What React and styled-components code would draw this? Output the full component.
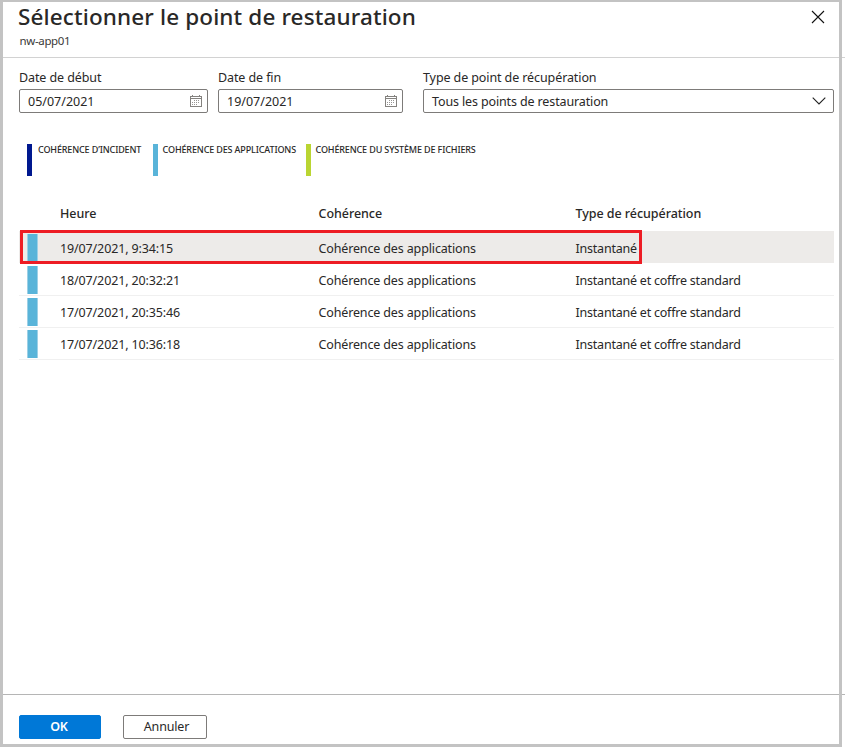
import styled, { createGlobalStyle } from 'styled-components';

const GlobalStyle = createGlobalStyle`
    *{
        box-sizing: border-box;
    }
    body{
        background-color: #fff;
        color: #292827;
        font-family: 'Noto Sans', 'Open Sans', sans-serif;
        font-size: 12.5px;
        margin: 0;
        overflow: hidden;
    }
`

const PageStyled = styled.main`
    display: flex;
    flex-direction: column;
    height: 749px;
    position: relative;
    width: 845px;
`

const Frame = styled.div`
    border: 3px solid #c3c3c3;
    border-top-width: 2px;
    height: 747px;
    left: 0;
    pointer-events: none;
    position: absolute;
    top: 0;
    width: 842px;
`

const Header = styled.header`
    border-bottom: 1px solid #d2d2d2;
    display: flex;
    height: 58px;
    justify-content: space-between;
    padding: 2px 20px 0 18px;
    h1{
        font-size: 22.5px;
        font-weight: 500;
        letter-spacing: 0.13px;
        line-height: 30px;
        margin: 0;
    }
    p{
        color: #3b3a39;
        font-size: 11.5px;
        letter-spacing: -0.35px;
        line-height: 16px;
        margin: 1px 0 0 1.5px;
    }
`

const CloseBtn = styled.button`
    background: none;
    border: 0;
    height: 14px;
    margin-top: 8px;
    padding: 0;
    width: 14px;
    svg{
        display: block;
    }
`

const Filters = styled.section`
    display: grid;
    grid-template-columns: 189px 185px 411px;
    padding: 10px 0 0 19px;
    column-gap: 10px;
    label:last-child{
        margin-left: 10px;
        width: 411px;
    }
`

const FieldStyled = styled.label`
    display: flex;
    flex-direction: column;
    gap: 2px;
    line-height: 19px;
    .box{
        align-items: center;
        border: 1px solid #7d7b79;
        border-radius: 2px;
        display: flex;
        height: 24px;
        justify-content: space-between;
        padding: 0 ${props => props.$end}px 0 8px;
    }
    .name{
        letter-spacing: -0.1px;
    }
    .value{
        letter-spacing: ${props => props.$spacing}px;
    }
`

const Legend = styled.ul`
    display: flex;
    list-style: none;
    margin: 31px 0 0;
    padding: 0 0 0 27px;
`

const LegendItem = styled.li`
    border-left: 5px solid ${props => props.$color};
    font-size: 9px;
    font-weight: 500;
    height: 32px;
    letter-spacing: -0.14px;
    line-height: 12px;
    padding-left: ${props => props.$pad}px;
    white-space: nowrap;
    width: ${props => props.$width}px;
`

const Table = styled.section`
    flex: 1;
    margin: 19px 11px 0 19px;
    position: relative;
`

const Row = styled.div`
    align-items: center;
    align-content: start;
    background-color: ${props => props.$selected ? '#edebe9' : 'transparent'};
    background-clip: padding-box;
    border-bottom: 1px solid ${props => props.$selected ? '#fff' : '#f0f0f0'};
    display: grid;
    grid-template-columns: 41px 258.5px 257px 1fr;
    height: ${props => props.$selected ? 33 : 32}px;
    padding-top: ${props => props.$selected ? 3 : 2}px;
    .bar{
        background-color: #59b4d9;
        border: solid #9dd0e6;
        border-width: 0 1px;
        height: 28px;
        margin-left: 8px;
        width: 11px;
    }
    .time{
        letter-spacing: -0.13px;
    }
    .state{
        letter-spacing: -0.14px;
    }
    .type{
        letter-spacing: -0.22px;
    }
`

const HeadRow = styled(Row)`
    align-content: center;
    border: 0;
    font-weight: 500;
    height: 36px;
    letter-spacing: -0.05px;
    padding: 0;
`

const Highlight = styled.div`
    border: 3px solid #ed1c24;
    height: 34px;
    left: 1px;
    position: absolute;
    top: 35px;
    width: 622px;
`

const Footer = styled.footer`
    border-top: 1px solid #b5b5b5;
    display: flex;
    gap: 22px;
    height: 55px;
    padding: 20px 0 0 19px;
`

const Btn = styled.button`
    background-color: ${props => props.$primary ? '#0078d7' : '#fff'};
    border: 1px solid ${props => props.$primary ? '#0078d7' : '#7d7b79'};
    border-radius: 2px;
    color: ${props => props.$primary ? '#fff' : '#292827'};
    font-family: inherit;
    font-size: 12.5px;
    font-weight: ${props => props.$primary ? 600 : 400};
    height: 24px;
    letter-spacing: -0.15px;
    line-height: 20px;
    padding: 0;
    width: ${props => props.$primary ? 82 : 84}px;
    span{
        margin-left: ${props => props.$primary ? -2 : 3}px;
    }
`

const legend = [
    { label: 'COHÉRENCE D’INCIDENT', color: '#00188f', width: 126, pad: 6 },
    { label: 'COHÉRENCE DES APPLICATIONS', color: '#59b4d9', width: 153, pad: 4.6 },
    { label: 'COHÉRENCE DU SYSTÈME DE FICHIERS', color: '#bad532', width: 200, pad: 4.5 },
]

const points = [
    { time: '19/07/2021, 9:34:15', type: 'Instantané' },
    { time: '18/07/2021, 20:32:21', type: 'Instantané et coffre standard' },
    { time: '17/07/2021, 20:35:46', type: 'Instantané et coffre standard' },
    { time: '17/07/2021, 10:36:18', type: 'Instantané et coffre standard' },
]

function CalendarIcon(){
    return(
        <svg width='12' height='12' viewBox='0 0 12 12' shapeRendering='crispEdges'>
            <path d='M.5 1.5h11v10H.5zM1 3.5h10M2.5 0v2M9.5 0v2' fill='none' stroke='#84827f' />
            <path d='M4 5.5h6M2 7.5h8M2 9.5h6' stroke='#979593' strokeDasharray='1 1' />
        </svg>
    )
}

function Chevron(){
    return(
        <svg width='14' height='8' viewBox='0 0 14 8'>
            <path d='M.7.7 7 7 13.3.7' fill='none' stroke='#222' strokeWidth='1.1' />
        </svg>
    )
}

function Field({ name, value, icon, end, spacing = 0 }){
    return(
        <FieldStyled $end={end} $spacing={spacing}>
            <span className='name'>{name}</span>
            <div className='box'>
                <span className='value'>{value}</span>
                {icon}
            </div>
        </FieldStyled>
    )
}

export default function App(){
    return(
        <PageStyled>
            <GlobalStyle />
            <Header>
                <div>
                    <h1>Sélectionner le point de restauration</h1>
                    <p>nw-app01</p>
                </div>
                <CloseBtn aria-label='Fermer'>
                    <svg width='14' height='14' viewBox='0 0 14 14'>
                        <path d='M1 1l12 12M13 1L1 13' stroke='#111' strokeWidth='1.1' />
                    </svg>
                </CloseBtn>
            </Header>
            <Filters>
                <Field name='Date de début' value='05/07/2021' icon={<CalendarIcon />} end={5} />
                <Field name='Date de fin' value='19/07/2021' icon={<CalendarIcon />} end={5} />
                <Field name='Type de point de récupération' value='Tous les points de restauration' icon={<Chevron />} end={7} spacing={-0.13} />
            </Filters>
            <Legend>
                {legend.map(item => (
                    <LegendItem key={item.label} $color={item.color} $width={item.width} $pad={item.pad}>
                        <span>{item.label}</span>
                    </LegendItem>
                ))}
            </Legend>
            <Table>
                <HeadRow>
                    <span />
                    <span>Heure</span>
                    <span>Cohérence</span>
                    <span>Type de récupération</span>
                </HeadRow>
                {points.map((point, i) => (
                    <Row key={point.time} $selected={i === 0}>
                        <span className='bar' />
                        <span className='time'>{point.time}</span>
                        <span className='state'>Cohérence des applications</span>
                        <span className='type'>{point.type}</span>
                    </Row>
                ))}
                <Highlight />
            </Table>
            <Footer>
                <Btn $primary><span>OK</span></Btn>
                <Btn><span>Annuler</span></Btn>
            </Footer>
            <Frame />
        </PageStyled>
    )
}
